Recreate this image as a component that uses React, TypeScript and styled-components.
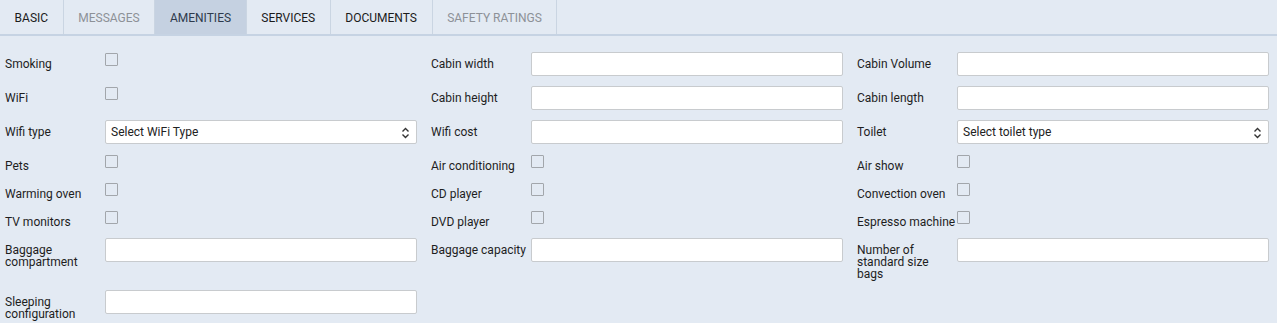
import styled, { createGlobalStyle } from "styled-components";

const GlobalStyle = createGlobalStyle`
  html, body {
    margin: 0;
    padding: 0;
    background: #e3eaf3;
    font-family: Roboto, "Liberation Sans", sans-serif;
  }
`;

const Page = styled.div`
  width: 1277px;
  min-height: 323px;
  background: #e3eaf3;
`;

const TabBar = styled.div`
  display: flex;
  height: 34px;
  border-bottom: 2px solid #c6d3e3;
`;

const Tab = styled.div<{ $active?: boolean; $muted?: boolean }>`
  display: flex;
  align-items: center;
  padding: 1px 14.6px 0;
  font-size: 12px;
  text-transform: uppercase;
  color: ${(p) => (p.$muted ? "#8d9197" : p.$active ? "#2e3a4c" : "#1b1b1b")};
  background: ${(p) => (p.$active ? "#c5d1e1" : "transparent")};
  border-right: 1px solid #cad5e2;
`;

const Form = styled.div`
  display: grid;
  grid-template-columns: repeat(3, 412px);
  column-gap: 14px;
  row-gap: 10px;
  padding: 16px 5px;
`;

const Cell = styled.div`
  display: flex;
  align-items: flex-start;
`;

const Label = styled.label`
  width: 100px;
  flex-shrink: 0;
  padding: 6px 0 0;
  font-size: 12px;
  line-height: 12px;
  color: #1e1e1e;
`;

const TextInput = styled.input`
  width: 312px;
  height: 24px;
  box-sizing: border-box;
  border: 1px solid #c8cbce;
  border-radius: 2px;
  background: #fff;
  padding: 0 5px;
  font-family: inherit;
  font-size: 12px;
  outline: none;
`;

const SelectBox = styled.div`
  position: relative;
  width: 312px;
  height: 24px;
  box-sizing: border-box;
  border: 1px solid #c8cbce;
  border-radius: 2px;
  background: #fff;
  display: flex;
  align-items: center;
  padding: 0 5px;
  font-size: 12px;
  color: #222;

  svg {
    position: absolute;
    right: 6px;
    top: 6px;
  }
`;

const Check = styled.input.attrs({ type: "checkbox" })`
  appearance: none;
  width: 13px;
  height: 13px;
  margin: 1px 0 0;
  box-sizing: border-box;
  border: 1px solid #a2a6ab;
  border-radius: 1px;
  background: transparent;
`;

type Field =
  | { label: string; kind: "text" }
  | { label: string; kind: "check" }
  | { label: string; kind: "select"; placeholder: string };

const rows: (Field | null)[][] = [
  [
    { label: "Smoking", kind: "check" },
    { label: "Cabin width", kind: "text" },
    { label: "Cabin Volume", kind: "text" },
  ],
  [
    { label: "WiFi", kind: "check" },
    { label: "Cabin height", kind: "text" },
    { label: "Cabin length", kind: "text" },
  ],
  [
    { label: "Wifi type", kind: "select", placeholder: "Select WiFi Type" },
    { label: "Wifi cost", kind: "text" },
    { label: "Toilet", kind: "select", placeholder: "Select toilet type" },
  ],
  [
    { label: "Pets", kind: "check" },
    { label: "Air conditioning", kind: "check" },
    { label: "Air show", kind: "check" },
  ],
  [
    { label: "Warming oven", kind: "check" },
    { label: "CD player", kind: "check" },
    { label: "Convection oven", kind: "check" },
  ],
  [
    { label: "TV monitors", kind: "check" },
    { label: "DVD player", kind: "check" },
    { label: "Espresso machine", kind: "check" },
  ],
  [
    { label: "Baggage compartment", kind: "text" },
    { label: "Baggage capacity", kind: "text" },
    { label: "Number of standard size bags", kind: "text" },
  ],
  [{ label: "Sleeping configuration", kind: "text" }, null, null],
];

const tabs = [
  { name: "Basic" },
  { name: "Messages", muted: true },
  { name: "Amenities", active: true },
  { name: "Services" },
  { name: "Documents" },
  { name: "Safety ratings", muted: true },
];

function UpDown() {
  return (
    <svg width="9" height="12" viewBox="0 0 9 12" fill="none">
      <path d="M1.5 4.5 L4.5 1.5 L7.5 4.5" stroke="#333" strokeWidth="1.4" />
      <path d="M1.5 7.5 L4.5 10.5 L7.5 7.5" stroke="#333" strokeWidth="1.4" />
    </svg>
  );
}

function FieldCell({ field }: { field: Field | null }) {
  if (!field) return <Cell />;
  return (
    <Cell>
      <Label>{field.label}</Label>
      {field.kind === "text" && <TextInput type="text" />}
      {field.kind === "check" && <Check />}
      {field.kind === "select" && (
        <SelectBox>
          {field.placeholder}
          <UpDown />
        </SelectBox>
      )}
    </Cell>
  );
}

export default function App() {
  return (
    <Page>
      <GlobalStyle />
      <TabBar>
        {tabs.map((t) => (
          <Tab key={t.name} $active={t.active} $muted={t.muted}>
            {t.name}
          </Tab>
        ))}
      </TabBar>
      <Form>
        {rows.map((row, i) =>
          row.map((field, j) => <FieldCell key={`${i}-${j}`} field={field} />)
        )}
      </Form>
    </Page>
  );
}
